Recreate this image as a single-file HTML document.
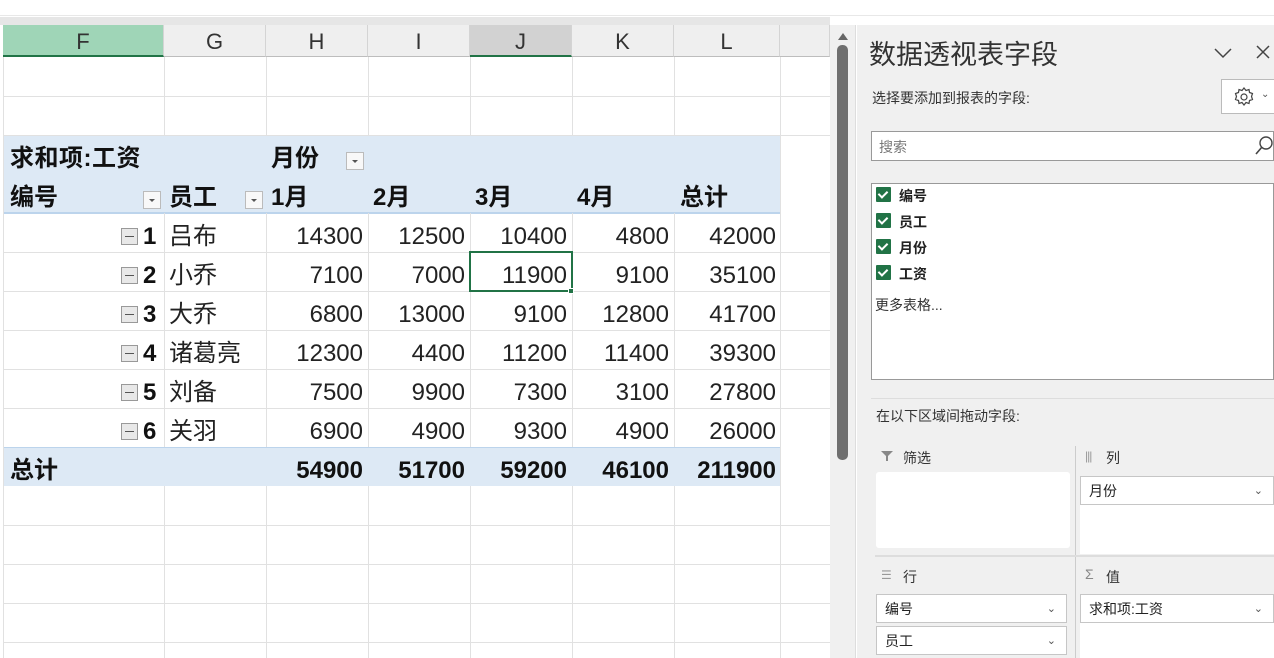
<!DOCTYPE html><html><head><meta charset="utf-8"><style>
*{margin:0;padding:0;box-sizing:border-box}
body{width:1274px;height:658px;overflow:hidden;background:#fff;position:relative;font-family:"Liberation Sans","Noto Sans CJK SC",sans-serif;color:#222}
.a{position:absolute}
.hl{position:absolute;left:3px;width:827px;height:1px;background:#e1e1e1}
.vl{position:absolute;top:57px;height:601px;width:1px;background:#e1e1e1}
.ch{position:absolute;top:25px;height:32px;background:#efefef;border-right:1px solid #d4d4d4;border-bottom:1px solid #bdbdbd;font-size:22px;text-align:center;line-height:34px;color:#333}
.c{position:absolute;font-size:24px;height:39px;line-height:42px;white-space:nowrap}
.r{text-align:right}
.b{font-weight:bold;color:#111}
.dd{position:absolute;width:18px;height:18px;border:1px solid #bbb;background:#f8f8f8}
.dd:after{content:"";position:absolute;left:5px;top:7px;border:3px solid transparent;border-top:3px solid #555}
.mn{position:absolute;width:17px;height:17px;border:1px solid #999;background:#e8e8e8}
.mn:after{content:"";position:absolute;left:3px;top:7px;width:9px;height:1px;background:#555}
.p{font-size:14px;color:#333}
.cb{position:absolute;left:876px;width:15px;height:15px;background:#217346;border-radius:1px}
.cb:after{content:"";position:absolute;left:4px;top:2px;width:4px;height:7px;border:solid #fff;border-width:0 2px 2px 0;transform:rotate(45deg)}
.fl{position:absolute;font-size:14px;font-weight:bold;color:#222;left:899px}
.box{position:absolute;background:#fff;border:1px solid #c6c6c6;font-size:14px;line-height:28px;padding-left:8px}
.box i{position:absolute;right:10px;top:0;font-style:normal;font-size:11px;color:#555}
</style></head><body>
<div class="a" style="left:0;top:0;width:1274px;height:16px;background:#fff;border-bottom:1px solid #e8e8e8"></div>
<div class="a" style="left:0;top:17px;width:830px;height:8px;background:#e6e6e6"></div>
<div class="ch" style="left:3px;width:161px;background:#9fd5b7;border-bottom:2px solid #217346">F</div>
<div class="ch" style="left:164px;width:102px">G</div>
<div class="ch" style="left:266px;width:102px">H</div>
<div class="ch" style="left:368px;width:102px">I</div>
<div class="ch" style="left:470px;width:102px;background:#d2d2d2;border-bottom:2px solid #217346">J</div>
<div class="ch" style="left:572px;width:102px">K</div>
<div class="ch" style="left:674px;width:106px">L</div>
<div class="ch" style="left:780px;width:50px"></div>
<div class="a" style="left:3px;top:136px;width:777px;height:77px;background:#dde9f5"></div>
<div class="a" style="left:3px;top:212px;width:777px;height:2px;background:#bcd4ec"></div>
<div class="a" style="left:3px;top:448px;width:777px;height:38px;background:#dde9f5"></div>
<div class="a" style="left:3px;top:447px;width:777px;height:1px;background:#bcd4ec"></div>
<div class="hl" style="top:96px"></div><div class="hl" style="top:135px"></div>
<div class="hl" style="top:252px"></div><div class="hl" style="top:291px"></div><div class="hl" style="top:330px"></div><div class="hl" style="top:369px"></div><div class="hl" style="top:408px"></div><div class="hl" style="top:525px"></div><div class="hl" style="top:564px"></div><div class="hl" style="top:603px"></div><div class="hl" style="top:642px"></div>
<div class="vl" style="left:3px"></div>
<div class="vl" style="left:164px;height:79px"></div><div class="vl" style="left:164px;top:213px;height:234px"></div><div class="vl" style="left:164px;top:486px;height:172px"></div>
<div class="vl" style="left:266px;height:79px"></div><div class="vl" style="left:266px;top:213px;height:234px"></div><div class="vl" style="left:266px;top:486px;height:172px"></div>
<div class="vl" style="left:368px;height:79px"></div><div class="vl" style="left:368px;top:213px;height:234px"></div><div class="vl" style="left:368px;top:486px;height:172px"></div>
<div class="vl" style="left:470px;height:79px"></div><div class="vl" style="left:470px;top:213px;height:234px"></div><div class="vl" style="left:470px;top:486px;height:172px"></div>
<div class="vl" style="left:572px;height:79px"></div><div class="vl" style="left:572px;top:213px;height:234px"></div><div class="vl" style="left:572px;top:486px;height:172px"></div>
<div class="vl" style="left:674px;height:79px"></div><div class="vl" style="left:674px;top:213px;height:234px"></div><div class="vl" style="left:674px;top:486px;height:172px"></div>
<div class="vl" style="left:780px"></div>
<div class="c b" style="left:10px;top:138px;letter-spacing:0.5px">求和项:工资</div>
<div class="c b" style="left:271px;top:138px">月份</div><div class="dd" style="left:346px;top:152px"></div>
<div class="c b" style="left:10px;top:177px">编号</div><div class="dd" style="left:143px;top:191px"></div>
<div class="c b" style="left:169px;top:177px">员工</div><div class="dd" style="left:245px;top:191px"></div>
<div class="c b" style="left:271px;top:177px">1月</div><div class="c b" style="left:373px;top:177px">2月</div><div class="c b" style="left:475px;top:177px">3月</div><div class="c b" style="left:577px;top:177px">4月</div><div class="c b" style="left:680px;top:177px">总计</div>
<div class="mn" style="left:121px;top:228px"></div><div class="c b" style="left:143px;top:216px">1</div><div class="c" style="left:169px;top:216px">吕布</div>
<div class="mn" style="left:121px;top:267px"></div><div class="c b" style="left:143px;top:255px">2</div><div class="c" style="left:169px;top:255px">小乔</div>
<div class="mn" style="left:121px;top:306px"></div><div class="c b" style="left:143px;top:294px">3</div><div class="c" style="left:169px;top:294px">大乔</div>
<div class="mn" style="left:121px;top:345px"></div><div class="c b" style="left:143px;top:333px">4</div><div class="c" style="left:169px;top:333px">诸葛亮</div>
<div class="mn" style="left:121px;top:384px"></div><div class="c b" style="left:143px;top:372px">5</div><div class="c" style="left:169px;top:372px">刘备</div>
<div class="mn" style="left:121px;top:423px"></div><div class="c b" style="left:143px;top:411px">6</div><div class="c" style="left:169px;top:411px">关羽</div>
<div class="c b" style="left:10px;top:450px">总计</div>
<div class="a" style="left:266px;top:213px;width:512px">
<div class="c r" style="left:0;top:3px;width:97px">14300</div><div class="c r" style="left:102px;top:3px;width:97px">12500</div><div class="c r" style="left:204px;top:3px;width:97px">10400</div><div class="c r" style="left:306px;top:3px;width:97px">4800</div><div class="c r" style="left:408px;top:3px;width:102px">42000</div>
<div class="c r" style="left:0;top:42px;width:97px">7100</div><div class="c r" style="left:102px;top:42px;width:97px">7000</div><div class="c r" style="left:204px;top:42px;width:97px">11900</div><div class="c r" style="left:306px;top:42px;width:97px">9100</div><div class="c r" style="left:408px;top:42px;width:102px">35100</div>
<div class="c r" style="left:0;top:81px;width:97px">6800</div><div class="c r" style="left:102px;top:81px;width:97px">13000</div><div class="c r" style="left:204px;top:81px;width:97px">9100</div><div class="c r" style="left:306px;top:81px;width:97px">12800</div><div class="c r" style="left:408px;top:81px;width:102px">41700</div>
<div class="c r" style="left:0;top:120px;width:97px">12300</div><div class="c r" style="left:102px;top:120px;width:97px">4400</div><div class="c r" style="left:204px;top:120px;width:97px">11200</div><div class="c r" style="left:306px;top:120px;width:97px">11400</div><div class="c r" style="left:408px;top:120px;width:102px">39300</div>
<div class="c r" style="left:0;top:159px;width:97px">7500</div><div class="c r" style="left:102px;top:159px;width:97px">9900</div><div class="c r" style="left:204px;top:159px;width:97px">7300</div><div class="c r" style="left:306px;top:159px;width:97px">3100</div><div class="c r" style="left:408px;top:159px;width:102px">27800</div>
<div class="c r" style="left:0;top:198px;width:97px">6900</div><div class="c r" style="left:102px;top:198px;width:97px">4900</div><div class="c r" style="left:204px;top:198px;width:97px">9300</div><div class="c r" style="left:306px;top:198px;width:97px">4900</div><div class="c r" style="left:408px;top:198px;width:102px">26000</div>
<div class="c r b" style="left:0;top:237px;width:97px">54900</div><div class="c r b" style="left:102px;top:237px;width:97px">51700</div><div class="c r b" style="left:204px;top:237px;width:97px">59200</div><div class="c r b" style="left:306px;top:237px;width:97px">46100</div><div class="c r b" style="left:408px;top:237px;width:102px">211900</div>
</div>
<div class="a" style="left:469px;top:251px;width:104px;height:41px;border:2px solid #217346"></div>
<div class="a" style="left:568px;top:288px;width:6px;height:6px;background:#217346;border:1px solid #fff"></div>
<div class="a" style="left:830px;top:25px;width:26px;height:633px;background:#f0f0f0;border-right:1px solid #ddd"></div>
<div class="a" style="left:838px;top:28px;border:5px solid transparent;border-bottom:7px solid #666"></div>
<div class="a" style="left:837px;top:45px;width:11px;height:415px;background:#6f6f6f;border-radius:5px"></div>
<div class="a" style="left:857px;top:25px;width:417px;height:633px;background:#f0f0f0"></div>
<div class="a" style="left:869px;top:33px;font-size:27px;color:#333">数据透视表字段</div>
<svg class="a" style="left:1213px;top:46px" width="20" height="14"><path d="M2 3l8 8 8-8" fill="none" stroke="#444" stroke-width="1.5"/></svg>
<svg class="a" style="left:1255px;top:44px" width="16" height="16"><path d="M2 2l12 12M14 2L2 14" stroke="#444" stroke-width="1.5"/></svg>
<div class="a p" style="left:872px;top:88px">选择要添加到报表的字段:</div>
<div class="a" style="left:1221px;top:79px;width:60px;height:35px;border:1px solid #bbb;background:#fff"></div>
<svg class="a" style="left:1232px;top:85px" width="24" height="24" viewBox="0 0 24 24"><path d="M12 3l2 2.5 3-1 .5 3 3 1-1 3 1 3-3 1-.5 3-3-1-2 2.5-2-2.5-3 1-.5-3-3-1 1-3-1-3 3-1 .5-3 3 1z" fill="none" stroke="#444" stroke-width="1.2"/><circle cx="12" cy="12" r="3" fill="none" stroke="#444" stroke-width="1.2"/></svg>
<div class="a" style="left:1261px;top:89px;font-size:10px;color:#555">⌄</div>
<div class="a" style="left:871px;top:131px;width:403px;height:30px;background:#fff;border:1px solid #999"></div>
<div class="a p" style="left:879px;top:137px;color:#777">搜索</div>
<svg class="a" style="left:1253px;top:134px" width="22" height="24"><circle cx="13" cy="9" r="6" fill="none" stroke="#444" stroke-width="1.4"/><path d="M9 13l-6 7" stroke="#444" stroke-width="1.6"/></svg>
<div class="a" style="left:871px;top:183px;width:403px;height:197px;background:#fff;border:1px solid #999"></div>
<div class="cb" style="top:187px"></div><div class="fl" style="top:186px">编号</div>
<div class="cb" style="top:213px"></div><div class="fl" style="top:212px">员工</div>
<div class="cb" style="top:239px"></div><div class="fl" style="top:238px">月份</div>
<div class="cb" style="top:265px"></div><div class="fl" style="top:264px">工资</div>
<div class="a p" style="left:875px;top:295px">更多表格...</div>
<div class="a" style="left:871px;top:398px;width:403px;height:1px;background:#ddd"></div>
<div class="a p" style="left:876px;top:406px">在以下区域间拖动字段:</div>
<div class="a" style="left:1075px;top:446px;width:1px;height:212px;background:#ccc"></div>
<div class="a" style="left:875px;top:555px;width:399px;height:2px;background:#ddd"></div>
<svg class="a" style="left:880px;top:449px" width="14" height="14"><path d="M1 2h12L8 7v5H6V7z" fill="#888"/></svg>
<div class="a p" style="left:903px;top:448px">筛选</div>
<div class="a" style="left:876px;top:472px;width:194px;height:76px;background:#fff;border-radius:3px"></div>
<div class="a" style="left:1085px;top:449px;font-size:12px;color:#999;letter-spacing:-1px">|||</div>
<div class="a p" style="left:1106px;top:448px">列</div>
<div class="box" style="left:1080px;top:476px;width:194px;height:29px">月份<i>⌄</i></div>
<div class="a" style="left:1080px;top:505px;width:194px;height:49px;background:#fff"></div>
<div class="a" style="left:881px;top:568px;font-size:12px;color:#999">☰</div>
<div class="a p" style="left:903px;top:567px">行</div>
<div class="a" style="left:1085px;top:566px;font-size:14px;color:#888">Σ</div>
<div class="a p" style="left:1106px;top:567px">值</div>
<div class="box" style="left:876px;top:594px;width:191px;height:29px">编号<i>⌄</i></div>
<div class="box" style="left:876px;top:626px;width:191px;height:29px">员工<i>⌄</i></div>
<div class="box" style="left:1080px;top:594px;width:194px;height:29px">求和项:工资<i>⌄</i></div>
<div class="a" style="left:1080px;top:623px;width:194px;height:35px;background:#fff"></div>
</body></html>
